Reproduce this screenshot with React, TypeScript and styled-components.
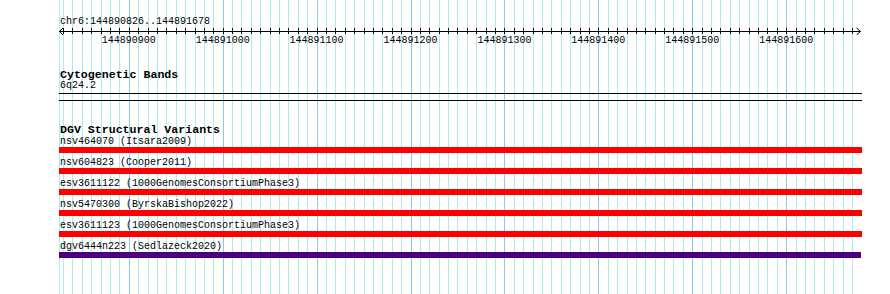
import React from "react";
import styled, { createGlobalStyle } from "styled-components";

const START = 144890826;
const END = 144891678;
const PX_PER_BP = 0.9391;
const ORIGIN_X = 129.3 - (144890900 - START) * PX_PER_BP; // page x of START
const LEFT = 59;
const WIDTH = 803;

const toX = (bp: number) => ORIGIN_X + (bp - START) * PX_PER_BP;

const minorTicks: number[] = [];
for (let bp = Math.ceil(START / 10) * 10; bp <= END; bp += 10) minorTicks.push(bp);
const majorTicks = minorTicks.filter((bp) => bp % 100 === 0);

const variants = [
  { name: "nsv464070", study: "Itsara2009", color: "#ff0000", width: 803 },
  { name: "nsv604823", study: "Cooper2011", color: "#ff0000", width: 803 },
  { name: "esv3611122", study: "1000GenomesConsortiumPhase3", color: "#ff0000", width: 803 },
  { name: "nsv5470300", study: "ByrskaBishop2022", color: "#ff0000", width: 803 },
  { name: "esv3611123", study: "1000GenomesConsortiumPhase3", color: "#ff0000", width: 803 },
  { name: "dgv6444n223", study: "Sedlazeck2020", color: "#4b0082", width: 802 },
];

const GlobalStyle = createGlobalStyle`
  html, body { margin: 0; padding: 0; background: #ffffff; }
  body { width: 890px; height: 294px; overflow: hidden; }
`;

const Page = styled.div`
  position: relative;
  width: 890px;
  height: 294px;
  overflow: hidden;
  background: #ffffff;
  font-family: "Liberation Mono", "DejaVu Sans Mono", monospace;
  color: #000;
`;

const GridLayer = styled.svg`
  position: absolute;
  left: 0;
  top: 0;
  z-index: 0;
`;

const Content = styled.div`
  position: relative;
  z-index: 1;
  margin-left: ${LEFT}px;
  width: ${WIDTH}px;
  display: flex;
  flex-direction: column;
`;

const Location = styled.div`
  margin-top: 17px;
  padding-left: 1px;
  font-size: 10px;
  line-height: 10px;
  height: 10px;
  white-space: nowrap;
`;

const RulerSvg = styled.svg`
  display: block;
`;

const TickLabels = styled.div`
  position: relative;
  height: 10px;
  margin-top: 1px;
  font-size: 10px;
  line-height: 10px;
`;

const TickLabel = styled.span`
  position: absolute;
  top: 0;
  transform: translateX(-50%);
  white-space: nowrap;
`;

const Track = styled.section<{ $top?: boolean; $bottom?: boolean }>`
  display: flex;
  flex-direction: column;
  border-top: ${(p) => (p.$top ? "1px solid #000" : "none")};
  border-bottom: ${(p) => (p.$bottom ? "1px solid #000" : "none")};
`;

const TrackTitle = styled.h3<{ $gap: number }>`
  margin: ${(p) => p.$gap}px 0 0 0;
  padding-left: 1px;
  font-size: 11.6px;
  line-height: 12px;
  height: 12px;
  font-weight: bold;
  white-space: nowrap;
`;

const BandLabel = styled.div`
  padding-left: 1px;
  font-size: 10px;
  line-height: 10px;
  height: 10px;
  margin-bottom: 2px;
`;

const Spacer = styled.div<{ $h: number }>`
  height: ${(p) => p.$h}px;
`;

const FeatureList = styled.div`
  display: flex;
  flex-direction: column;
  margin-top: 1px;
`;

const FeatureRow = styled.div`
  display: flex;
  flex-direction: column;
  margin-bottom: 5px;
`;

const FeatureLabel = styled.div`
  padding-left: 1px;
  font-size: 10px;
  line-height: 10px;
  height: 10px;
  white-space: nowrap;
`;

const FeatureBar = styled.div<{ $color: string; $w: number }>`
  height: 6px;
  width: ${(p) => p.$w}px;
  background: ${(p) => p.$color};
`;

function Grid() {
  return (
    <GridLayer width={890} height={294}>
      <line x1={LEFT + 0.5} x2={LEFT + 0.5} y1={0} y2={294} stroke="#aeeaf0" strokeWidth={1} />
      {minorTicks.map((bp) => {
        const x = Math.floor(toX(bp)) + 0.5;
        const major = bp % 100 === 0;
        return (
          <line
            key={bp}
            x1={x}
            x2={x}
            y1={0}
            y2={294}
            stroke={major ? "#8cc8f0" : "#aeeaf0"}
            strokeWidth={1}
          />
        );
      })}
    </GridLayer>
  );
}

function Ruler() {
  const y = 4.5;
  const w = 803;
  return (
    <RulerSvg width={w} height={8}>
      <line x1={0} x2={801.5} y1={y} y2={y} stroke="#000" strokeWidth={1} />
      <polyline points="4,1 0.5,4.5 4,8" fill="none" stroke="#000" strokeWidth={1} />
      <polyline points="797.5,1 801.5,4.5 797.5,8" fill="none" stroke="#000" strokeWidth={1} />
      {minorTicks.map((bp) => {
        const x = Math.floor(toX(bp)) + 0.5 - LEFT;
        return <line key={bp} x1={x} x2={x} y1={1} y2={7} stroke="#000" strokeWidth={1} />;
      })}
    </RulerSvg>
  );
}

export default function App() {
  return (
    <>
      <GlobalStyle />
      <Page>
        <Grid />
        <Content>
          <Location>chr6:144890826..144891678</Location>
          <Ruler />
          <TickLabels>
            {majorTicks.map((bp) => (
              <TickLabel key={bp} style={{ left: toX(bp) - LEFT - 0.5 }}>
                {bp}
              </TickLabel>
            ))}
          </TickLabels>
          <Track $bottom>
            <TrackTitle $gap={23}>Cytogenetic Bands</TrackTitle>
            <BandLabel>6q24.2</BandLabel>
          </Track>
          <Spacer $h={6} />
          <Track $top>
            <TrackTitle $gap={23}>DGV Structural Variants</TrackTitle>
            <FeatureList>
              {variants.map((v) => (
                <FeatureRow key={v.name}>
                  <FeatureLabel>
                    {v.name} ({v.study})
                  </FeatureLabel>
                  <FeatureBar $color={v.color} $w={v.width} />
                </FeatureRow>
              ))}
            </FeatureList>
          </Track>
        </Content>
      </Page>
    </>
  );
}
